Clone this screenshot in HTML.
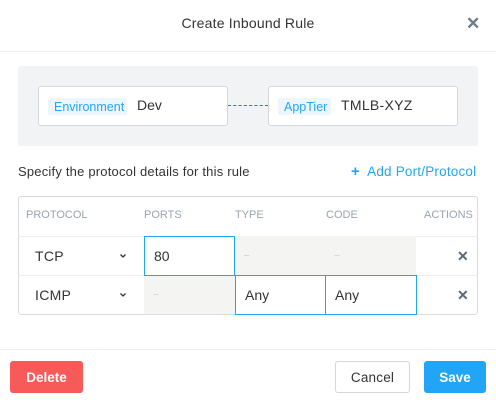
<!DOCTYPE html>
<html><head><style>
*{box-sizing:border-box;margin:0;padding:0}
body{width:496px;height:403px;background:#fff;font-family:"Liberation Sans",sans-serif;position:relative;overflow:hidden;color:#333}
.a{position:absolute}
.cell{position:absolute;display:flex;align-items:center;font-size:14px}
.hd{position:absolute;top:209px;font-size:11px;color:#9aa3ae}
.x{position:absolute;font-size:14px;font-weight:bold;color:#5b6775}
</style></head><body>
<div class="a" style="left:0;top:15px;width:496px;text-align:center;font-size:14px;color:#333;letter-spacing:.2px">Create Inbound Rule</div>
<div class="a" style="left:466px;top:14px;font-size:17px;font-weight:bold;color:#6c7986">✕</div>
<div class="a" style="left:0;top:51px;width:496px;height:1px;background:#eceef1"></div>
<div class="a" style="left:18px;top:66px;width:460px;height:80px;background:#f2f3f5;border-radius:3px"></div>
<div class="a" style="left:38px;top:86px;width:190px;height:40px;background:#fff;border:1px solid #d4d8dd;border-radius:3px"></div>
<div class="a" style="left:48px;top:98px;width:79px;height:17px;background:#eef6fd;border-radius:2px;color:#22a5f7;font-size:12.5px;line-height:18px;padding-left:6px">Environment</div>
<div class="a" style="left:137px;top:97px;font-size:14px">Dev</div>
<div class="a" style="left:228px;top:105px;width:40px;border-top:1px dashed #3c6fb0"></div>
<div class="a" style="left:268px;top:86px;width:190px;height:40px;background:#fff;border:1px solid #d4d8dd;border-radius:3px"></div>
<div class="a" style="left:278px;top:98px;width:53px;height:17px;background:#eef6fd;border-radius:2px;color:#22a5f7;font-size:12.5px;line-height:18px;padding-left:6px">AppTier</div>
<div class="a" style="left:341px;top:97px;font-size:14px;letter-spacing:.3px">TMLB-XYZ</div>
<div class="a" style="left:18px;top:164px;font-size:13px;color:#333;letter-spacing:.2px">Specify the protocol details for this rule</div>
<div class="a" style="left:351px;top:163px;font-size:13.5px;color:#22a5f7;letter-spacing:.2px"><b style="font-size:15px">+</b>&nbsp; Add Port/Protocol</div>
<div class="a" style="left:18px;top:196px;width:460px;height:119px;border:1px solid #d9dde2;border-radius:3px"></div>
<div class="hd" style="left:26px">PROTOCOL</div>
<div class="hd" style="left:144px">PORTS</div>
<div class="hd" style="left:235px">TYPE</div>
<div class="hd" style="left:326px">CODE</div>
<div class="hd" style="left:424px">ACTIONS</div>
<div class="a" style="left:19px;top:236px;width:458px;height:1px;background:#eceef1"></div>
<div class="a" style="left:19px;top:275px;width:458px;height:1px;background:#eceef1"></div>
<div class="a" style="left:235px;top:236px;width:181px;height:39px;background:#f4f5f2"></div>
<div class="a" style="left:144px;top:276px;width:91px;height:38px;background:#f4f5f2"></div>
<div class="cell" style="left:144px;top:236px;width:91px;height:40px;border:1px solid #22a5f7;padding-left:9px">80</div>
<div class="cell" style="left:235px;top:275px;width:91px;height:40px;border:1px solid #22a5f7;padding-left:9px">Any</div>
<div class="cell" style="left:325px;top:275px;width:92px;height:40px;border:1px solid #22a5f7;padding-left:9px">Any</div>
<div class="a" style="left:244px;top:250px;color:#ccc;font-size:10px">–</div>
<div class="a" style="left:334px;top:250px;color:#ccc;font-size:10px">–</div>
<div class="a" style="left:153px;top:289px;color:#ccc;font-size:10px">–</div>
<div class="cell" style="left:35px;top:236px;height:40px;letter-spacing:.3px">TCP</div>
<div class="cell" style="left:35px;top:275px;height:40px;letter-spacing:.3px">ICMP</div>
<svg class="a" style="left:120px;top:254px" width="6" height="4"><path d="M0.5 0.5L3 3L5.5 0.5" stroke="#333" stroke-width="1.3" fill="none"/></svg>
<svg class="a" style="left:120px;top:293px" width="6" height="4"><path d="M0.5 0.5L3 3L5.5 0.5" stroke="#333" stroke-width="1.3" fill="none"/></svg>
<div class="x" style="left:457px;top:248px">✕</div>
<div class="x" style="left:457px;top:287px">✕</div>
<div class="a" style="left:0;top:349px;width:496px;height:1px;background:#eceef1"></div>
<div class="a" style="left:10px;top:361px;width:73px;height:32px;background:#f85959;border-radius:3px;color:#fff;font-weight:bold;font-size:13.5px;line-height:33px;text-align:center">Delete</div>
<div class="a" style="left:335px;top:361px;width:75px;height:32px;border:1px solid #d4d8dd;border-radius:3px;color:#333;font-size:13.5px;line-height:31px;text-align:center;letter-spacing:.2px">Cancel</div>
<div class="a" style="left:424px;top:361px;width:62px;height:32px;background:#22a5f7;border-radius:3px;color:#fff;font-weight:bold;font-size:13.5px;line-height:33px;text-align:center">Save</div>
</body></html>
